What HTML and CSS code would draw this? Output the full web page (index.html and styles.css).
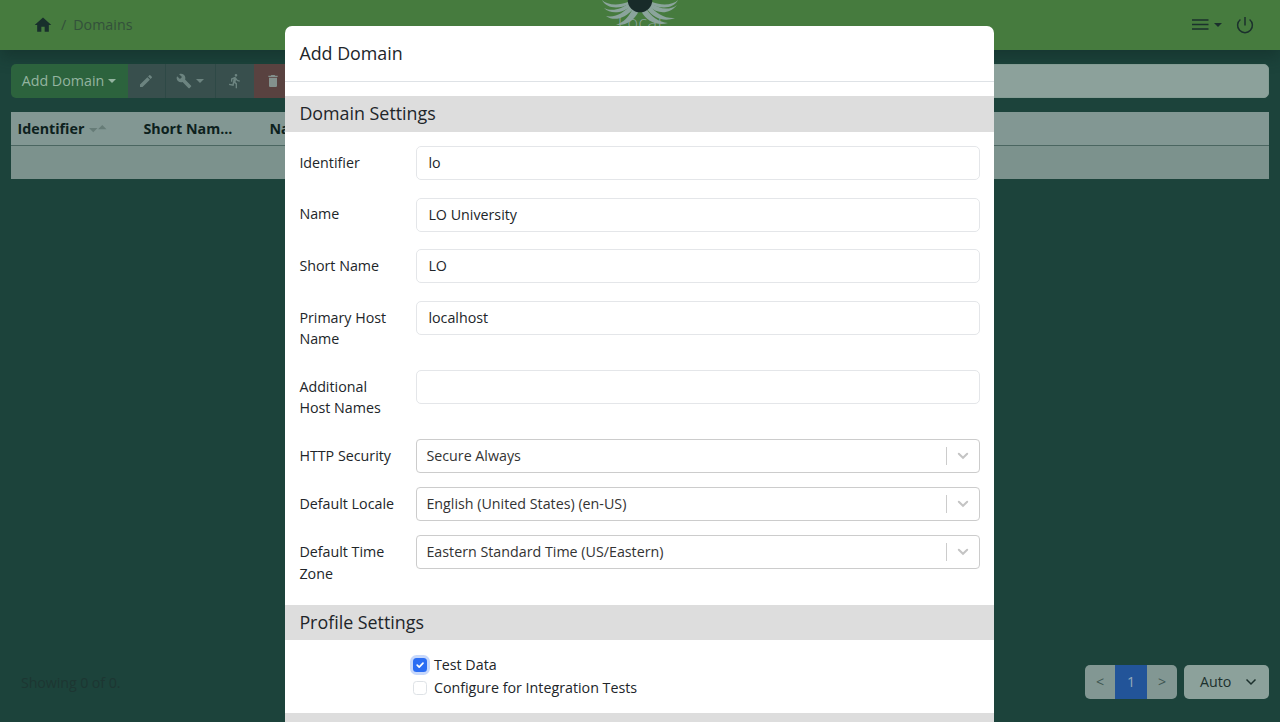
FILE: index.html
```html
<!DOCTYPE html>
<html lang="en">
<head>
<meta charset="utf-8">
<title>Domains</title>
<link rel="stylesheet" href="styles.css">
</head>
<body>
<div class="page">
  <header class="topbar">
    <nav class="crumbs">
      <svg class="home" width="20" height="20" viewBox="0 0 24 24"><path d="M10 20v-6h4v6h5v-8h3L12 3 2 12h3v8z"/></svg>
      <span class="slash">/</span><span>Domains</span>
    </nav>
    <div class="brand">
      <svg class="emblem" width="80" height="30" viewBox="0 0 80 30">
        <g class="wings">
          <path d="M2 0C7 5 18 6 28 2L29 4C18 10 6 8 2 0z"/>
          <path d="M4 8C12 12 22 9 29 3L31 6C23 13 11 15 4 8z"/>
          <path d="M6 16C16 18 24 12 30 6L33 9C26 18 14 22 6 16z"/>
          <path d="M16 25C24 22 29 17 33 8L39 11C34 20 27 26 16 25z"/>
          <path d="M78 0C73 5 62 6 52 2L51 4C62 10 74 8 78 0z"/>
          <path d="M77 5C69 11 59 9 51 3L49 6C57 14 69 15 77 5z"/>
          <path d="M75 18C65 19 56 13 50 6L47 9C54 19 65 22 75 18z"/>
          <path d="M68 23C59 22 51 17 46 8L41 11C47 22 58 26 68 23z"/>
        </g>
        <circle cx="40" cy="0" r="12.300"/>
      </svg>
      <span class="brand-name">Local</span>
    </div>
    <div class="top-actions">
      <svg width="17" height="12" viewBox="0 0 17 12"><path class="line" d="M0 1h16.500M0 5.500h16.500M0 10h16.500"/></svg>
      <i class="caret"></i>
      <svg class="power" width="18" height="18" viewBox="0 0 18 18"><path class="line" d="M9 1v8.500M4.400 3.500a7.400 7.400 0 1 0 9.200 0"/></svg>
    </div>
  </header>

  <main class="content">
    <div class="toolbar">
      <div class="buttons">
        <span class="btn add">Add Domain<i class="caret"></i></span>
        <span class="btn edit"><svg width="16" height="16" viewBox="0 0 24 24"><path d="M3 17.250V21h3.750L17.810 9.940l-3.750-3.750zM20.710 7.040a1 1 0 0 0 0-1.410l-2.340-2.340a1 1 0 0 0-1.410 0l-1.830 1.830 3.750 3.750z"/></svg></span>
        <span class="btn tools"><svg width="16" height="16" viewBox="0 0 24 24"><path d="M22.700 19l-9.100-9.100c.9-2.300.4-5-1.500-6.900-2-2-5-2.400-7.400-1.300L9 6 6 9 1.600 4.700C.4 7.100.9 10.100 2.900 12.100c1.900 1.900 4.600 2.400 6.900 1.500l9.100 9.100c.4.4 1 .4 1.400 0l2.300-2.300c.5-.4.5-1.100.1-1.400z"/></svg><i class="caret"></i></span>
        <span class="btn run"><svg width="16" height="16" viewBox="0 0 24 24"><path d="M13.490 5.480a2 2 0 1 0 0-4 2 2 0 0 0 0 4zM9.890 19.380l1-4.400 2.100 2v6h2v-7.500l-2.100-2 .6-3c1.300 1.500 3.300 2.500 5.500 2.500v-2c-1.900 0-3.500-1-4.300-2.400l-1-1.600c-.4-.6-1-1-1.700-1-.3 0-.5.1-.8.1l-5.200 2.200v4.700h2v-3.400l1.800-.7-1.600 8.100-4.900-1-.4 2z"/></svg></span>
        <span class="btn remove"><svg width="16" height="16" viewBox="0 0 24 24"><path d="M6 19c0 1.100.9 2 2 2h8c1.100 0 2-.9 2-2V7H6zM19 4h-3.500l-1-1h-5l-1 1H5v2h14z"/></svg></span>
      </div>
      <div class="search"></div>
    </div>
    <div class="table">
      <div class="thead">
        <span class="col-id">Identifier<svg class="sort" width="18" height="8" viewBox="0 0 18 8"><path d="M0 3h8.500L4.250 7.300zM9 4.300h8.500L13.250 0z"/></svg></span>
        <span class="col-short">Short Nam...</span>
        <span>Name</span>
      </div>
      <div class="tbody"></div>
    </div>
  </main>

  <footer class="footer">
    <span class="count">Showing 0 of 0.</span>
    <div class="paging">
      <div class="pager"><span>&lt;</span><span class="current">1</span><span>&gt;</span></div>
      <div class="size">Auto<svg width="12" height="8" viewBox="0 0 12 8"><path class="line" d="M1.500 1.500L6 6l4.500-4.500"/></svg></div>
    </div>
  </footer>
</div>

<div class="modal">
  <div class="modal-title">Add Domain</div>
  <section>
    <h2>Domain Settings</h2>
    <div class="form">
      <div class="row"><label>Identifier</label><div class="input">lo</div></div>
      <div class="row"><label>Name</label><div class="input">LO University</div></div>
      <div class="row"><label>Short Name</label><div class="input">LO</div></div>
      <div class="row"><label>Primary Host Name</label><div class="input">localhost</div></div>
      <div class="row"><label>Additional<br>Host Names</label><div class="input"></div></div>
      <div class="row compact"><label>HTTP Security</label><div class="select"><span>Secure Always</span><svg width="12" height="8" viewBox="0 0 12 8"><path d="M1.800 1.800L6 5.800l4.200-4"/></svg></div></div>
      <div class="row compact"><label>Default Locale</label><div class="select"><span>English (United States) (en-US)</span><svg width="12" height="8" viewBox="0 0 12 8"><path d="M1.800 1.800L6 5.800l4.200-4"/></svg></div></div>
      <div class="row compact"><label>Default Time Zone</label><div class="select"><span>Eastern Standard Time (US/Eastern)</span><svg width="12" height="8" viewBox="0 0 12 8"><path d="M1.800 1.800L6 5.800l4.200-4"/></svg></div></div>
    </div>
  </section>
  <section>
    <h2>Profile Settings</h2>
    <div class="checks">
      <div class="check"><span class="box on"><svg width="14" height="14" viewBox="0 0 14 14"><path d="M4.200 7.200l2 2L10 5.200"/></svg></span>Test Data</div>
      <div class="check"><span class="box"></span>Configure for Integration Tests</div>
    </div>
  </section>
  <section><h2></h2></section>
</div>
</body>
</html>
```

FILE: styles.css
```css
* { box-sizing: border-box; }
body {
  margin: 0;
  height: 722px;
  overflow: hidden;
  position: relative;
  font: 14.27px/21.5px "Open Sans", "Noto Sans", sans-serif;
  color: #212529;
  background: #1c433b;
}
svg { flex: none; fill: currentColor; }
.line { fill: none; stroke: currentColor; stroke-width: 1.5; }
.caret {
  display: inline-block;
  border: 4px solid transparent;
  border-top-color: currentColor;
  border-bottom: 0;
}
.page { height: 722px; display: flex; flex-direction: column; }

.topbar {
  height: 50px;
  flex: none;
  padding: 0 26px 0 33px;
  display: flex;
  justify-content: space-between;
  background: #467b3e;
  color: #1b302d;
  box-shadow: 0 7px 14px rgba(15, 40, 36, .45);
}
.crumbs { flex: 1; display: flex; align-items: center; color: #33503b; }
.home { color: #182f2c; }
.slash { margin: 0 7px 0 8px; }
.brand { width: 80px; display: grid; align-items: start; justify-items: center; height: 50px; overflow: hidden; }
.emblem, .brand-name { grid-area: 1 / 1; }
.emblem { fill: #182b29; }
.wings { fill: #8ba49c; }
.brand-name { color: #8ba49c; font: 300 18px/22px "Open Sans", sans-serif; margin-top: 11px; letter-spacing: .5px; }
.top-actions { flex: 1; display: flex; align-items: center; justify-content: flex-end; }
.top-actions .caret { margin: 0 14px 0 5px; }
.crumbs { margin-right: -7px; }

.content { flex: 1; padding: 14px 11px 0 10.500px; }
.toolbar { display: flex; height: 34px; }
.buttons { display: flex; width: 294px; margin-right: 14px; border-radius: 5px; overflow: hidden; }
.btn { display: flex; align-items: center; justify-content: center; background: #384f4d; color: #6c8480; border-right: 1px solid #2e4946; }
.add { width: 117px; background: #2c633d; color: #94b4a0; border: 0; }
.add .caret { margin-left: 4px; }
.edit { width: 38px; }
.tools { width: 50px; }
.tools .caret { margin-left: 4px; }
.run { width: 38px; border: 0; }
.remove { width: 38px; background: #594240; color: #83918d; border: 0; }
.search { flex: 1; border: 1px solid #849c94; border-radius: 5px; background: #8ca19b; }
.table { margin-top: 14px; height: 67px; color: #0d211d; }
.thead {
  height: 34px;
  display: flex;
  align-items: center;
  padding-left: 7px;
  font-weight: 700;
  background: #829793;
  border-bottom: 1px solid #4b6661;
}
.col-id { width: 126px; }
.col-short { width: 126px; }
.sort { margin-left: 5px; color: #667c77; vertical-align: 1px; }
.tbody { height: 33px; background: #7c928d; }

.footer { height: 57px; flex: none; padding: 0 11px 0 21px; display: flex; justify-content: space-between; }
.count { margin-top: 7px; color: #1d3632; letter-spacing: -.1px; }
.paging { display: flex; gap: 7px; height: 34px; }
.pager { display: flex; width: 92px; border-radius: 5px; overflow: hidden; background: #829793; color: #3d5550; line-height: 34px; text-align: center; }
.pager span { flex: 1; }
.pager .current { flex: none; width: 32px; background: #225499; color: #93aaba; }
.size { width: 85px; display: flex; align-items: center; gap: 14px; padding-left: 16px; border-radius: 5px; background: #8ca19b; color: #1c302d; }

.modal {
  position: absolute;
  top: 26px;
  left: 285.4px;
  width: 709px;
  height: 696px;
  overflow: hidden;
  border-radius: 7px 7px 0 0;
  background: #fff;
}
.modal-title { height: 56px; padding: 14px 14px 0; border-bottom: 1px solid #dee2e6; margin-bottom: 14px; font-size: 17.85px; line-height: 27px; }
.modal h2 { margin: 0; height: 35.5px; padding: 0 14px; font-size: 17.85px; line-height: 35px; font-weight: 400; background: #ddd; }
.form { height: 473px; padding: 14.5px 14px 0; }
.row { display: grid; grid-template-columns: 117px 1fr; padding-bottom: 17.5px; }
.row.compact { padding-bottom: 14px; }
.row label { margin: 6px 20px 6px 0; }
.row:nth-child(2) label { margin-top: 5.500px; }
.row:nth-child(4) label, .row:nth-child(5) label { margin-bottom: 2.500px; }
.row.compact label { margin-top: 6.500px; }
.input, .select { height: 34px; border-radius: 5px; padding: 0 11px; line-height: 32px; border: 1px solid #e4e6e9; }
.row:nth-child(2) .input { line-height: 31px; }
.select { display: flex; align-items: center; padding: 0 10px 0 9px; border: 1px solid #ccc; border-radius: 4px; color: #333; }
.select span { flex: 1; padding-top: 1px; }
.select svg { order: 2; fill: none; stroke: #c4c4c4; stroke-width: 2; stroke-linecap: round; }
.select::after { content: ""; order: 1; width: 1px; height: 18px; margin-right: 10px; background: #ccc; }
.checks { height: 73px; padding: 13.400px 0 0 127.500px; }
.check { display: flex; align-items: center; gap: 7px; height: 23px; }
.box { width: 14px; height: 14px; border: 1px solid #dee2e6; border-radius: 3.500px; }
.box.on { border: 0; background: #2b6df3; box-shadow: 0 0 0 3px #c7d8fb; }
.box svg { display: block; fill: none; stroke: #fff; stroke-width: 1.700; stroke-linecap: round; stroke-linejoin: round; }
```
